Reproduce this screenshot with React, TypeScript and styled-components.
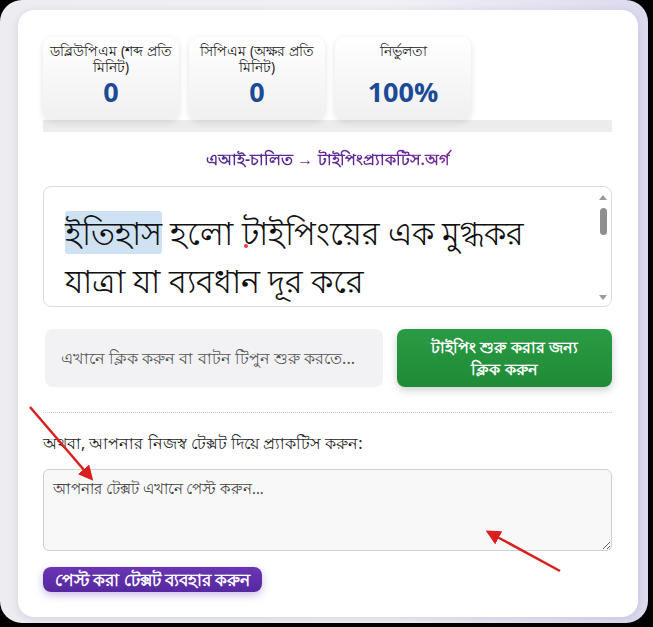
import React from 'react';
import styled, { createGlobalStyle } from 'styled-components';

const GlobalStyle = createGlobalStyle`
	html, body {
		margin: 0;
		padding: 0;
		background: #000;
	}
	body {
		font-family: 'Noto Sans', 'Liberation Sans', sans-serif;
	}
	* {
		box-sizing: border-box;
	}
`;

const Frame = styled.div`
	position: relative;
	width: 648px;
	height: 623px;
	border-radius: 22px;
	background: linear-gradient(90deg, #ededf1 0%, #f1f1f5 60%, #dcdbee 100%);
	padding: 10px 10px 6px 18px;
`;

const Card = styled.div`
	height: 100%;
	background: #ffffff;
	border-radius: 16px;
	box-shadow: 0 2px 10px rgba(90, 80, 160, 0.18);
	padding: 27px 26px 0 25px;
`;

const StatsStrip = styled.div`
	background: #ececec;
	padding-bottom: 12px;
`;

const StatsRow = styled.div`
	display: flex;
	gap: 10px;
	background: #ffffff;
`;

const StatBox = styled.div`
	width: 136px;
	height: 83px;
	border-radius: 10px;
	background: linear-gradient(180deg, #ffffff 0%, #f0f0f0 100%);
	box-shadow: 0 2px 6px rgba(0, 0, 0, 0.12);
	display: flex;
	flex-direction: column;
	align-items: center;
	padding: 6px 6px 0;
	text-align: center;
`;

const StatLabel = styled.div`
	font-size: 13.5px;
	line-height: 16px;
	color: #222;
	height: 34px;
`;

const StatValue = styled.div`
	font-family: 'Open Sans', 'Liberation Sans', sans-serif;
	font-weight: 700;
	font-size: 27px;
	line-height: 30px;
	color: #1c4a96;
`;

const Brand = styled.div`
	text-align: center;
	margin: 17px 0 17px;
	font-size: 16px;
	font-weight: 600;
	line-height: 20px;
	background: linear-gradient(90deg, #3b2a8a 0%, #6a2a9a 60%, #8a2a8e 100%);
	-webkit-background-clip: text;
	background-clip: text;
	color: transparent;
`;

const Passage = styled.div`
	height: 121px;
	border: 1px solid #dcdcdc;
	border-radius: 8px;
	display: flex;
	overflow: hidden;
`;

const PassageText = styled.div`
	flex: 1;
	padding: 22px 6px 0 21px;
	font-size: 32px;
	line-height: 48px;
	color: #111;
	overflow: hidden;
`;

const ScrollTrack = styled.div`
	width: 16px;
	display: flex;
	flex-direction: column;
	align-items: center;
	padding: 8px 0 6px;
`;

const ScrollArrow = styled.div<{ $up?: boolean }>`
	width: 0;
	height: 0;
	border-left: 4px solid transparent;
	border-right: 4px solid transparent;
	${({ $up }) => ($up ? 'border-bottom: 5px solid #9a9a9a;' : 'border-top: 5px solid #9a9a9a;')}
`;

const ScrollThumb = styled.div`
	width: 7px;
	height: 27px;
	margin-top: 8px;
	border-radius: 4px;
	background: #8e8e8e;
`;

const ScrollSpace = styled.div`
	flex: 1;
`;

const Current = styled.span`
	background: #cfe2f3;
	border-radius: 3px;
`;

const Caret = styled.span`
	position: relative;
	&::after {
		content: '';
		position: absolute;
		left: 2px;
		bottom: 6px;
		width: 4px;
		height: 4px;
		border-radius: 50%;
		background: #ef3b3b;
	}
`;

const ActionRow = styled.div`
	display: flex;
	gap: 14px;
	margin-top: 22px;
	padding-left: 2px;
`;

const TypeInput = styled.input`
	flex: 1;
	min-width: 0;
	height: 58px;
	border: none;
	border-radius: 8px;
	background: #f2f2f4;
	padding: 0 8px 0 16px;
	font-family: 'Noto Sans', 'Liberation Sans', sans-serif;
	font-size: 16px;
	outline: none;
	&::placeholder {
		color: #555;
	}
`;

const StartButton = styled.button`
	width: 215px;
	height: 58px;
	border: none;
	border-radius: 8px;
	background: linear-gradient(180deg, #2a9b44 0%, #1f8a37 100%);
	box-shadow: 0 3px 8px rgba(0, 0, 0, 0.2);
	color: #fff;
	font-family: 'Noto Sans', 'Liberation Sans', sans-serif;
	font-weight: 700;
	font-size: 16px;
	line-height: 22px;
	padding: 0 18px;
`;

const Divider = styled.hr`
	border: none;
	border-top: 1px dotted #c9c9c9;
	margin: 25px 0 0;
`;

const Label = styled.div`
	margin-top: 19px;
	font-size: 16px;
	line-height: 22px;
	color: #222;
`;

const PasteArea = styled.textarea`
	display: block;
	width: 100%;
	height: 82px;
	margin-top: 15px;
	border: 1px solid #cfcfcf;
	border-radius: 6px;
	background: #f8f8f8;
	padding: 8px 9px;
	font-family: 'Noto Sans', 'Liberation Sans', sans-serif;
	font-size: 14.5px;
	resize: vertical;
	outline: none;
	&::placeholder {
		color: #444;
	}
`;

const UseButton = styled.button`
	margin-top: 16px;
	height: 25px;
	padding: 0 12px;
	border: none;
	border-radius: 8px;
	background: linear-gradient(180deg, #6a35b4 0%, #5529a0 100%);
	box-shadow: 0 3px 8px rgba(100, 60, 180, 0.35);
	color: #fff;
	font-family: 'Noto Sans', 'Liberation Sans', sans-serif;
	font-weight: 700;
	font-size: 16.5px;
	line-height: 25px;
`;

const Arrow = styled.svg`
	position: absolute;
	left: 0;
	top: 0;
	pointer-events: none;
`;

const stats = [
	{ label: 'ডব্লিউপিএম (শব্দ প্রতি মিনিট)', value: '0' },
	{ label: 'সিপিএম (অক্ষর প্রতি মিনিট)', value: '0' },
	{ label: 'নির্ভুলতা', value: '100%' },
];

export default function App() {
	return (
		<>
			<GlobalStyle />
			<Frame>
				<Card>
					<StatsStrip>
						<StatsRow>
							{stats.map((s) => (
								<StatBox key={s.label}>
									<StatLabel>{s.label}</StatLabel>
									<StatValue>{s.value}</StatValue>
								</StatBox>
							))}
						</StatsRow>
					</StatsStrip>
					<Brand>এআই-চালিত → টাইপিংপ্র্যাকটিস.অর্গ</Brand>
					<Passage>
						<PassageText>
							<Current>ইতিহাস</Current> হলো <Caret>টা</Caret>ইপিংয়ের এক মুগ্ধকর
							<br />
							যাত্রা যা ব্যবধান দূর করে
							<br />
							এবং মানুষকে একত্রিত করে।
						</PassageText>
						<ScrollTrack>
							<ScrollArrow $up />
							<ScrollThumb />
							<ScrollSpace />
							<ScrollArrow />
						</ScrollTrack>
					</Passage>
					<ActionRow>
						<TypeInput readOnly placeholder="এখানে ক্লিক করুন বা বাটন টিপুন শুরু করতে..." />
						<StartButton>টাইপিং শুরু করার জন্য ক্লিক করুন</StartButton>
					</ActionRow>
					<Divider />
					<Label>অথবা, আপনার নিজস্ব টেক্সট দিয়ে প্র্যাকটিস করুন:</Label>
					<PasteArea placeholder="আপনার টেক্সট এখানে পেস্ট করুন..." />
					<UseButton>পেস্ট করা টেক্সট ব্যবহার করুন</UseButton>
				</Card>
				<Arrow width="648" height="623" viewBox="0 0 648 623">
					<defs>
						<marker id="head" markerWidth="6" markerHeight="6" refX="4" refY="3" orient="auto">
							<path d="M0,0 L6,3 L0,6 Z" fill="#d91f1f" />
						</marker>
					</defs>
					<line x1="30" y1="407" x2="90" y2="477" stroke="#d91f1f" strokeWidth="2.5" markerEnd="url(#head)" />
					<line x1="560" y1="571" x2="490" y2="533" stroke="#d91f1f" strokeWidth="2.5" markerEnd="url(#head)" />
				</Arrow>
			</Frame>
		</>
	);
}
